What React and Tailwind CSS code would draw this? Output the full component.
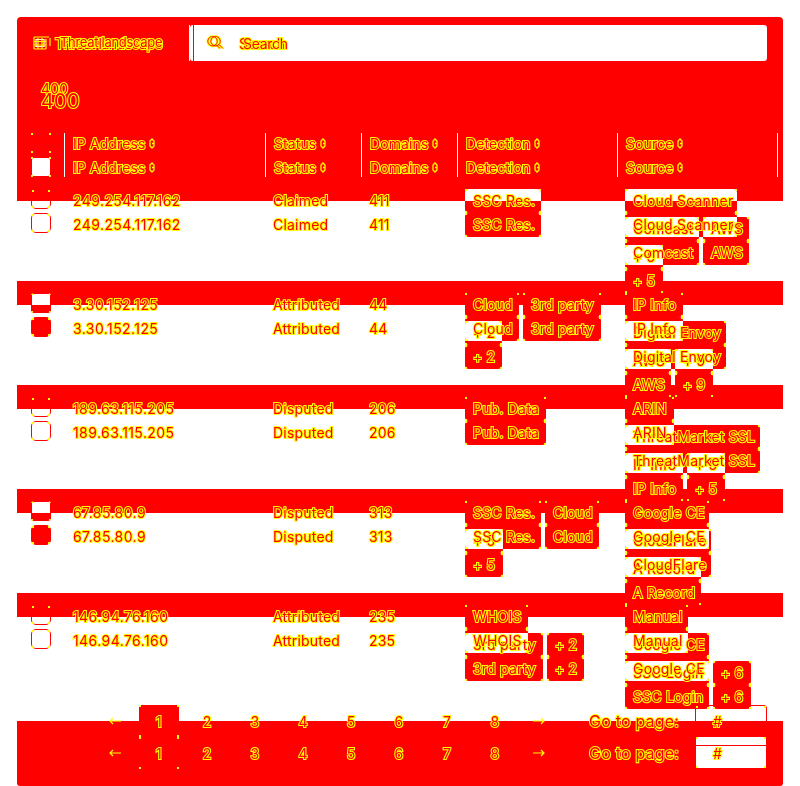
import React from "react";

const CORNERS =
  "bg-no-repeat bg-[length:2px_2px] [background-image:linear-gradient(#ff0,#ff0),linear-gradient(#ff0,#ff0),linear-gradient(#ff0,#ff0),linear-gradient(#ff0,#ff0)] [background-position:0_0,100%_0,0_100%,100%_100%]";
const INK =
  "text-[#ff0000] [-webkit-text-stroke:2.1px_#ffff00] [paint-order:stroke_fill] whitespace-nowrap";

// Widths of the chips, by label.
const WIDTHS = {
  "SSC Res.": "w-[76px]", Cloud: "w-[54px]", "3rd party": "w-[78px]", "+ 2": "w-[37px]",
  "+ 5": "w-[38px]", "+ 6": "w-[38px]", "+ 9": "w-[38px]", "Pub. Data": "w-[81px]",
  WHOIS: "w-[63px]", "Cloud Scanner": "w-[112px]", Comcast: "w-[74px]", AWS: "w-[46px]",
  "IP Info": "w-[58px]", "Digital Envoy": "w-[101px]", ARIN: "w-[49px]",
  "ThreatMarket SSL": "w-[135px]", "Google CE": "w-[84px]", CloudFlare: "w-[86px]",
  "A Record": "w-[76px]", Manual: "w-[63px]", "SSC Login": "w-[84px]",
};

const ROWS = [
  { ip: "249.254.117.162", status: "Claimed", domains: "411", checked: false,
    detection: [["SSC Res."]], source: [["Cloud Scanner"], ["Comcast", "AWS"], ["+ 5"]] },
  { ip: "3.30.152.125", status: "Attributed", domains: "44", checked: true,
    detection: [["Cloud", "3rd party"], ["+ 2"]], source: [["IP Info"], ["Digital Envoy"], ["AWS", "+ 9"]] },
  { ip: "189.63.115.205", status: "Disputed", domains: "206", checked: false,
    detection: [["Pub. Data"]], source: [["ARIN"], ["ThreatMarket SSL"], ["IP Info", "+ 5"]] },
  { ip: "67.85.80.9", status: "Disputed", domains: "313", checked: true,
    detection: [["SSC Res.", "Cloud"], ["+ 5"]], source: [["Google CE"], ["CloudFlare"], ["A Record"]] },
  { ip: "146.94.76.160", status: "Attributed", domains: "235", checked: false,
    detection: [["WHOIS"], ["3rd party", "+ 2"]], source: [["Manual"], ["Google CE"], ["SSC Login", "+ 6"]] },
];

// Chip whose background inverts whatever lies under it; its label stays on top.
function Tag({ label }) {
  return (
    <span className={"relative flex h-6 items-center pb-[2px] pl-2 " + WIDTHS[label]}>
      <span className="absolute inset-0 z-[1] rounded bg-[#00ffff] mix-blend-difference" />
      <span className={"absolute inset-0 z-[15] " + CORNERS} />
      <span className="relative z-20">{label}</span>
    </span>
  );
}

function Tags({ lines }) {
  return (
    <div className="flex flex-col gap-1">
      {lines.map((line, i) => (
        <div key={i} className="flex gap-1">
          {line.map((t) => <Tag key={t} label={t} />)}
        </div>
      ))}
    </div>
  );
}

function RowBox({ checked, upper }) {
  if (checked && !upper)
    return <span className="relative z-20 block size-5 rounded-[5px] border border-[#ff0000] bg-[#ff0000]"><span className={"absolute inset-0 " + CORNERS} /></span>;
  if (checked)
    return (
      <span className="relative z-20 flex size-5 flex-col overflow-hidden rounded-[3px]">
        <span className="mx-px mt-px h-[11px] bg-white" />
        <span className="h-2 bg-[#ff0000]" />
        <span className={"absolute inset-0 " + CORNERS} />
      </span>
    );
  return (
    <span className="relative z-20 block size-5 rounded-[5px] border border-[#ff0000]">
      <span className={"absolute inset-0 " + CORNERS} />
    </span>
  );
}

function RowLayer({ row, upper }) {
  return (
    <div className={"grid h-0 grid-cols-[48px_200px_96px_96px_160px_160px] [grid-area:1/1] " + (upper ? "-mt-3" : "mt-3")}>
      <div className="pl-[14px]"><RowBox checked={row.checked} upper={upper} /></div>
      <div className="relative z-20 pl-2 leading-6 tracking-[0.42px]">{row.ip}</div>
      <div className="relative z-20 pl-2 leading-6">{row.status}</div>
      <div className="relative z-20 pl-2 leading-6 tracking-[0.2px]">{row.domains}</div>
      <div className="pl-2"><Tags lines={row.detection} /></div>
      <div className="pl-2"><Tags lines={row.source} /></div>
    </div>
  );
}

function Sort() {
  return (
    <svg className="ml-1 h-[11px] w-[6px]" viewBox="0 0 6 11" fill="none" stroke="#ff0" strokeWidth="1.3">
      <path d="M3 1 1 3v5l2 2 2-2V3zM3 5.5h2" />
    </svg>
  );
}

function HeadLine({ label }) {
  return <div className="flex h-6 items-center tracking-[0.1px]">{label}<Sort /></div>;
}

const GLASS = "M6.5 1.5a4.7 4.7 0 1 0 .1 0M10 9.5l4 4";

function Glass() {
  return (
    <svg className="ml-3 h-4 w-[19px]" viewBox="0 0 19 16" fill="none">
      <path d={GLASS} stroke="#ff0" strokeWidth="2.6" />
      <path d={GLASS} stroke="#ff0" strokeWidth="2.4" transform="translate(3 0)" />
      <path d={GLASS} stroke="#f00" strokeWidth="0.9" />
      <path d={GLASS} stroke="#f00" strokeWidth="0.9" transform="translate(3 0)" />
    </svg>
  );
}

const PAGES = ["1", "2", "3", "4", "5", "6", "7", "8"];

function Pages() {
  return (
    <div className="flex h-8 items-center">
      <div className="ml-[78px] flex items-center">
        <Arrow />
        {PAGES.map((p) => (
          <div key={p} className="flex h-8 w-12 items-center justify-center">
            {p === "1" ? (
              <span className={"flex h-8 w-10 items-center justify-center bg-[#ff0000] " + CORNERS}>{p}</span>
            ) : p}
          </div>
        ))}
        <Arrow right />
      </div>
      <span className="ml-[30px] w-[106px] text-[16px]">Go to page:</span>
      <span className="pl-[18px]">#</span>
    </div>
  );
}

function Arrow({ right }) {
  return (
    <span className="flex w-10 justify-center">
      <svg className={"h-2 w-3 " + (right ? "rotate-180" : "")} viewBox="0 0 12 8" fill="none" stroke="#ff0" strokeWidth="1.2">
        <path d="M12 4H1M4 1 1 4l3 3" />
      </svg>
    </span>
  );
}

export default function App() {
  return (
    <div className={"isolate h-[786px] w-[800px] overflow-hidden bg-white pl-[17px] pt-[17px] font-['Inter',sans-serif] text-[14px] tracking-[0.2px] " + INK}>
      <div className="flex w-[766px] flex-col">
        <header className="h-[184px] rounded-t-[4px] bg-[#ff0000]">
          <div className="flex h-[52px] justify-between pr-4 pt-2">
            <div className="flex h-9 w-[173px] items-center pl-4">
              <svg className="h-4 w-[18px]" viewBox="0 0 18 16" fill="none" stroke="#ff0" strokeWidth="1.2">
                <path d="M1 2h15M1 14h12M1 2v12M13 4v10M17 3v8" />
                <path d="M3 4.5h8v7H3z" stroke="#fff" />
                <path d="M1 6.5h12M1 10h12M5 3v11M9 3v11" />
              </svg>
              <span className="grid pl-1 tracking-[-0.5px]">
                <span className="text-[14px] [grid-area:1/1]">Threat landscape</span>
                <span className="pl-[5px] text-[13px] tracking-[-0.3px] [grid-area:1/1]">Threat landscape</span>
              </span>
            </div>
            <div className="flex h-9 w-[577px] items-center rounded-[3px] bg-white">
              <span className="-ml-px flex h-9 w-[5px] justify-end border-l border-white"><span className="w-px bg-[#ff0000]" /></span>
              <Glass />
              <span className="ml-[14px] grid">
                <span className="tracking-[-0.1px] [grid-area:1/1]">Search</span>
                <span className="pl-1 tracking-[-0.3px] [grid-area:1/1]">Search</span>
              </span>
            </div>
          </div>
          <div className="flex h-16 flex-col pl-6 pt-3">
            <span className="text-[14px] leading-4">400</span>
            <span className="-mt-1 text-[20px] leading-4">400</span>
          </div>
          <div className="grid h-11 grid-cols-[47px_201px_96px_96px_160px_161px]">
            <div className="flex flex-col gap-1 pl-[14px]">
              <span className={"size-5 " + CORNERS} />
              <span className={"flex size-5 p-px " + CORNERS}><span className="size-[18px] rounded-[2px] bg-white" /></span>
            </div>
            {["IP Address", "Status", "Domains", "Detection", "Source"].map((h) => (
              <div key={h} className={"h-11 border-l border-white pl-2 " + (h === "Source" ? "border-r" : "")}>
                <div className="-mt-[2px]"><HeadLine label={h} /><HeadLine label={h} /></div>
              </div>
            ))}
          </div>
        </header>
        {ROWS.map((row, i) => (
          <div key={row.ip} className="grid h-[104px]">
            <RowLayer row={row} upper />
            <RowLayer row={row} />
            {i < 4 && <div className="relative z-10 h-6 self-end bg-[#ff0000] [grid-area:1/1]" />}
          </div>
        ))}
        <footer className="relative z-20 grid h-[65px] rounded-b-[3px] bg-[#ff0000]">
          <div className="-mt-4 ml-[678px] h-10 w-[72px] rounded-[3px] border border-[#ff0000] [grid-area:1/1]">
            <span className={"block h-full " + CORNERS} />
          </div>
          <div className="ml-[679px] mt-4 h-[31px] w-[70px] rounded-[2px] bg-white pt-2 [grid-area:1/1]">
            <div className="h-px bg-[#ff0000]" />
            <span className={"-mt-[9px] block h-[31px] " + CORNERS} />
          </div>
          <div className="-mt-4 [grid-area:1/1]"><Pages /></div>
          <div className="mt-4 [grid-area:1/1]"><Pages /></div>
        </footer>
      </div>
    </div>
  );
}
